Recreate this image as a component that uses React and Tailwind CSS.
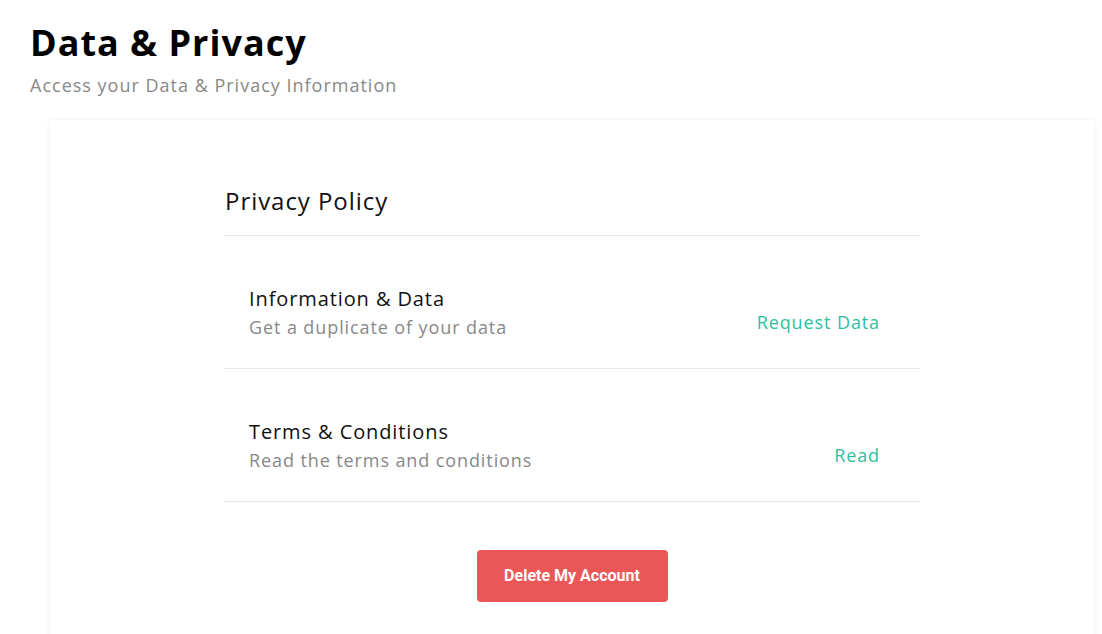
import React from 'react';

const rows = [
  { title: 'Information & Data', sub: 'Get a duplicate of your data', action: 'Request Data' },
  { title: 'Terms & Conditions', sub: 'Read the terms and conditions', action: 'Read' },
];

const PolicyRow = ({ title, sub, action }) => (
  <div className="flex items-end justify-between border-b border-[#e3e8ee] pl-[25px] pr-[40px] pt-[49px] pb-[29px]">
    <div>
      <div className="text-[20px] leading-[27px] tracking-[0.9px] text-[#111]">{title}</div>
      <div className="mt-[3px] text-[18px] leading-[24px] tracking-[0.9px] text-[#888]">{sub}</div>
    </div>
    <button className="mb-[5px] text-[18px] leading-[24px] tracking-[0.9px] text-[#2ec09c]">
      {action}
    </button>
  </div>
);

export default function App() {
  return (
    <div className="min-h-screen bg-white font-['Open_Sans',sans-serif]">
      <div className="pl-[30px] pt-[18px]">
        <h1 className="text-[36px] font-bold leading-[49px] tracking-[1px] text-black">Data &amp; Privacy</h1>
        <p className="mt-[6px] text-[18px] leading-[24.5px] tracking-[1px] text-[#888]">
          Access your Data &amp; Privacy Information
        </p>
      </div>
      <div className="ml-[50px] mr-[8px] mt-[22px] h-[560px] bg-white shadow-[0_0_5px_rgba(0,0,0,0.07)]">
        <div className="mx-auto w-[696px] pt-[65px]">
          <div className="border-b border-[#e3e8ee] pb-[18px] pl-px text-[24px] leading-[32.7px] tracking-[0.95px] text-[#111]">
            Privacy Policy
          </div>
          {rows.map((r) => (
            <PolicyRow key={r.title} {...r} />
          ))}
          <div className="flex justify-center pt-[48px]">
            <button className="h-[52px] w-[191px] rounded-[4px] bg-[#eb5757] font-['Roboto',sans-serif] text-[16px] font-bold tracking-[0px] text-white">
              Delete My Account
            </button>
          </div>
        </div>
      </div>
    </div>
  );
}
